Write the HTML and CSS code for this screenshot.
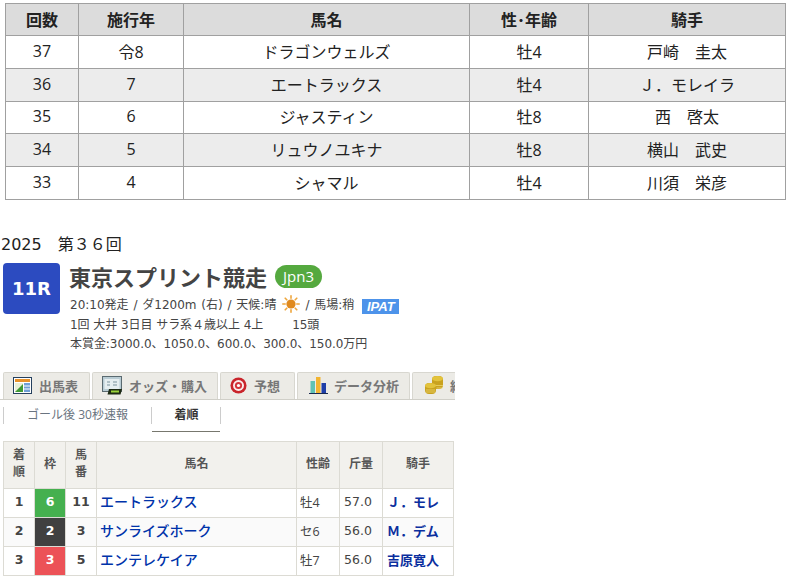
FILE: index.html
```html
<!DOCTYPE html>
<html lang="ja">
<head>
<meta charset="utf-8">
<title>東京スプリント競走</title>
<link rel="stylesheet" href="styles.css">
</head>
<body>
<table class="history">
<colgroup><col class="h1"><col class="h2"><col class="h3"><col class="h4"><col class="h5"></colgroup>
<thead><tr><th>回数</th><th>施行年</th><th>馬名</th><th>性･年齢</th><th>騎手</th></tr></thead>
<tbody>
<tr><td>37</td><td>令8</td><td>ドラゴンウェルズ</td><td>牡4</td><td>戸崎　圭太</td></tr>
<tr><td>36</td><td>7</td><td>エートラックス</td><td>牡4</td><td>Ｊ．モレイラ</td></tr>
<tr><td>35</td><td>6</td><td>ジャスティン</td><td>牡8</td><td>西　啓太</td></tr>
<tr><td>34</td><td>5</td><td>リュウノユキナ</td><td>牡8</td><td>横山　武史</td></tr>
<tr><td>33</td><td>4</td><td>シャマル</td><td>牡4</td><td>川須　栄彦</td></tr>
</tbody>
</table>

<p class="edition">2025　第３６回</p>

<section class="race">
  <div class="race-num">11R</div>
  <div class="race-info">
    <h1 class="race-title">東京スプリント競走<span class="grade">Jpn3</span></h1>
    <p class="race-line">20:10発走 / ダ1200m (右) / 天候:晴<svg class="sun" width="18" height="18" viewBox="0 0 18 18"><circle cx="9" cy="9" r="4.600" fill="#e08a1e"/><g stroke="#eea63c" stroke-width="1.600" stroke-linecap="round"><path d="M9 .8v2.400M9 14.800v2.400M.8 9h2.400M14.800 9h2.400M3.200 3.200l1.600 1.600M13.200 13.200l1.600 1.600M3.200 14.800l1.600-1.600M13.200 4.800l1.600-1.600"/></g></svg>/ 馬場:稍<span class="ipat">IPAT</span></p>
    <p class="race-sub">1回 大井 3日目 サラ系４歳以上 4上<span class="heads">15頭</span></p>
    <p class="race-sub">本賞金:3000.0、1050.0、600.0、300.0、150.0万円</p>
  </div>
</section>

<nav class="tabs">
  <a class="tab t1"><svg width="19" height="17" viewBox="0 0 19 17"><rect x=".5" y=".5" width="18" height="16" fill="#fff" stroke="#25405e"/><rect x="2" y="2" width="15" height="3" fill="#e8922a"/><path d="M2 15V6h8v9z" fill="#e9efd6"/><path d="M2 15l8-8v8z" fill="#3f9a35"/><path d="M11 6h6v9h-6z" fill="#6f9fd6"/><path d="M11 9h6M11 12h6" stroke="#fff"/></svg>出馬表</a>
  <a class="tab t2"><svg width="21" height="19" viewBox="0 0 21 19"><rect x=".5" y=".5" width="19" height="15" fill="#b9ccd4" stroke="#5a6a70"/><rect x="2.500" y="3" width="15" height="10" fill="#e6eef0"/><path d="M5 6h3M11 6h4M5 9h3M11 9h4" stroke="#7b929c"/><path d="M7 13h13l-1.500 5.500H5.500z" fill="#1d2a12"/><path d="M9 15.500h8" stroke="#9bd43a" stroke-width="2"/></svg>オッズ・購入</a>
  <a class="tab t3"><svg width="17" height="17" viewBox="0 0 18 18"><circle cx="9" cy="9" r="8.500" fill="#c9242b"/><circle cx="9" cy="9" r="5.800" fill="#fbeeee"/><circle cx="9" cy="9" r="3.800" fill="#d3343a"/><circle cx="9" cy="9" r="1.700" fill="#fff"/></svg>予想</a>
  <a class="tab t4"><svg width="19" height="18" viewBox="0 0 19 18"><rect x="1.500" y="5" width="4.500" height="12" fill="#5fc2b4"/><rect x="7" y="1" width="4.500" height="16" fill="#f2b430"/><rect x="12.500" y="7" width="4.500" height="10" fill="#1f3fa8"/><path d="M0 17.500h19" stroke="#1a2a50"/></svg>データ分析</a>
  <a class="tab t5"><svg width="19" height="18" viewBox="0 0 19 18"><g fill="#c9a21f"><rect x="7" y="0" width="11" height="13" rx="4"/><rect x="0" y="7" width="11" height="11" rx="4"/></g><g stroke="#f1dc78" stroke-width=".7"><path d="M11.500 12h6M7 9.500h11M1 14h9M1 16h9"/></g><ellipse cx="12.500" cy="2.600" rx="5.500" ry="2.600" fill="#e3c33c"/><ellipse cx="5.500" cy="9.600" rx="5.500" ry="2.600" fill="#e3c33c"/></svg>結果</a>
</nav>

<div class="subtabs">
  <a class="subtab">ゴール後 30秒速報</a>
  <a class="subtab active">着順</a>
</div>

<table class="result">
<colgroup><col class="r1"><col class="r2"><col class="r3"><col class="r4"><col class="r5"><col class="r6"><col class="r7"></colgroup>
<thead><tr><th>着<br>順</th><th>枠</th><th>馬<br>番</th><th>馬名</th><th>性齢</th><th>斤量</th><th>騎手</th></tr></thead>
<tbody>
<tr><td class="num">1</td><td class="waku w6">6</td><td class="num">11</td><td class="horse">エートラックス</td><td class="plain">牡4</td><td class="wt">57.0</td><td class="jockey">Ｊ．モレ</td></tr>
<tr class="alt"><td class="num">2</td><td class="waku w2">2</td><td class="num">3</td><td class="horse">サンライズホーク</td><td class="plain">セ6</td><td class="wt">56.0</td><td class="jockey">Ｍ．デム</td></tr>
<tr><td class="num">3</td><td class="waku w3">3</td><td class="num">5</td><td class="horse">エンテレケイア</td><td class="plain">牡7</td><td class="wt">56.0</td><td class="jockey">吉原寛人</td></tr>
</tbody>
</table>
</body>
</html>
```
FILE: styles.css
```css
* { box-sizing: border-box; }
html, body { margin: 0; padding: 0; }
body {
  width: 790px;
  height: 578px;
  overflow: hidden;
  background: #fff;
  color: #222;
  font-family: "Open Sans", "Noto Sans CJK JP", sans-serif;
}
p, h1 { margin: 0; font-weight: normal; }

.history {
  table-layout: fixed;
  border-collapse: collapse;
  width: 780px;
  margin: 3px 0 0 5px;
  font-size: 16px;
  color: #222;
}
.h1 { width: 73px; } .h2 { width: 105px; } .h3 { width: 286px; } .h4 { width: 119px; } .h5 { width: 197px; }
.history th, .history td {
  border: 1px solid #a0a0a0;
  text-align: center;
  padding: 0 0 2px;
  height: 32.750px;
}
.history th { height: 32px; background: #dcdcdc; font-weight: bold; }
.history tbody tr:nth-child(even) td { background: #ececec; }

.edition {
  margin: 35px 0 0 1px;
  font-family: "DejaVu Sans", "Noto Sans CJK JP", sans-serif;
  font-size: 16px;
  line-height: 20px;
  color: #222;
}

.race { display: flex; margin: 8px 0 0 3px; color: #444; }
.race-num {
  flex: none;
  width: 57px; height: 51px;
  border-radius: 4px;
  background: #2c4bc0;
  color: #fff;
  font-family: "DejaVu Sans", sans-serif;
  font-weight: bold;
  font-size: 18px;
  display: flex; align-items: center; justify-content: center;
}
.race-info { margin-left: 10px; }
.race-title { display: flex; align-items: center; margin-left: -1px; font-size: 22px; line-height: 28px; font-weight: bold; color: #444; }
.grade {
  width: 47px;
  margin-left: 8px;
  height: 23px;
  border-radius: 12px;
  background: #55a93f;
  color: #fff;
  font-size: 15px;
  line-height: 22px;
  text-align: center;
  font-weight: normal;
}
.race-line {
  font-family: "DejaVu Sans", "Noto Sans CJK JP", sans-serif;
  font-size: 12px;
  word-spacing: 1px;
  line-height: 21px;
  margin-top: 4px;
  white-space: nowrap;
}
.sun { vertical-align: -4px; margin: 0 5px 0 6px; }
.ipat {
  display: inline-block;
  vertical-align: -2px;
  width: 37px;
  margin-left: 8px;
  height: 15px;
  background: #4d93ea;
  color: #fff;
  text-align: center;
  font-family: "Liberation Sans", sans-serif;
  font-size: 13px; line-height: 15px;
  font-weight: bold; font-style: italic;
}
.race-sub {
  font-family: "DejaVu Sans", "Noto Sans CJK JP", sans-serif;
  font-size: 12px;
  letter-spacing: -.05px;
  line-height: 19px;
  white-space: nowrap;
}
.heads { margin-left: 29px; }

.tabs {
  display: flex;
  gap: 2px;
  width: 455px;
  height: 28px;
  margin: 18px 0 0;
  padding-left: 3px;
  overflow: hidden;
  border-bottom: 1px solid #d0cfc8;
}
.tab {
  flex: none;
  display: flex; align-items: center; gap: 7px;
  height: 27px;
  padding-bottom: 1px;
  background: #ecebe6;
  border: 1px solid #d8d7d0;
  border-bottom: 0;
  border-radius: 2px 2px 0 0;
  color: #777;
  font-size: 13px;
  font-weight: bold;
  white-space: nowrap;
}
.tab svg { flex: none; }
.t1 { width: 87px; padding-left: 9px; }
.t2 { width: 126px; padding-left: 9px; gap: 6px; }
.t3 { width: 75px; padding-left: 9px; }
.t4 { width: 113px; padding-left: 11px; gap: 6px; }
.t5 { width: 60px; padding-left: 12px; gap: 6px; }

.subtabs { display: flex; height: 25px; margin: 7px 0 0 3px; align-items: flex-start; }
.subtab {
  display: flex; align-items: center; justify-content: center;
  height: 17px;
  padding-bottom: 2px;
  border-left: 1px solid #ccc;
  font-size: 12px;
  color: #6a7480;
}
.subtab:first-child { width: 148px; }
.subtab.active {
  width: 70px;
  padding-left: 1px;
  border-right: 1px solid #ccc;
  color: #333;
  font-weight: bold;
  position: relative;
}
.subtab.active::after {
  content: ""; position: absolute; left: 0; right: 0; bottom: -8px; height: 1px; background: #77776e;
}

.result {
  table-layout: fixed;
  border-collapse: collapse;
  width: 451px;
  margin: 9px 0 0 3px;
  font-size: 13px;
  color: #444;
}
.r1 { width: 31px; } .r2 { width: 31px; } .r3 { width: 31px; } .r4 { width: 200px; } .r5 { width: 43px; } .r6 { width: 43px; } .r7 { width: 71px; }
.result th, .result td { border: 1px solid #dcdbd4; padding: 0 0 3px; text-align: center; }
.result th { height: 47px; background: #f2f1ed; font-size: 12px; font-weight: bold; line-height: 17px; color: #555; }
.result td { height: 29px; }
.result .alt td { background: #fafafa; }
.result .num { font-family: "DejaVu Sans", sans-serif; font-size: 12.500px; font-weight: bold; }
.result .waku { font-family: "DejaVu Sans", sans-serif; font-size: 12.500px; font-weight: bold; color: #fff; }
.result tr .w6 { background: #45b04f; }
.result tr .w2 { background: #404040; }
.result tr .w3 { background: #ec5257; }
.result .horse { text-align: left; padding-left: 3px; color: #0033aa; font-size: 14px; font-weight: 500; }
.result .plain { text-align: left; padding-left: 3px; font-size: 12.500px; }
.result .wt { font-family: "DejaVu Sans", sans-serif; font-size: 12.500px; text-align: left; padding-left: 4px; }
.result .jockey { color: #0b2f9e; font-size: 13px; font-weight: bold; white-space: nowrap; text-align: left; padding-left: 4px; overflow: hidden; }
```
